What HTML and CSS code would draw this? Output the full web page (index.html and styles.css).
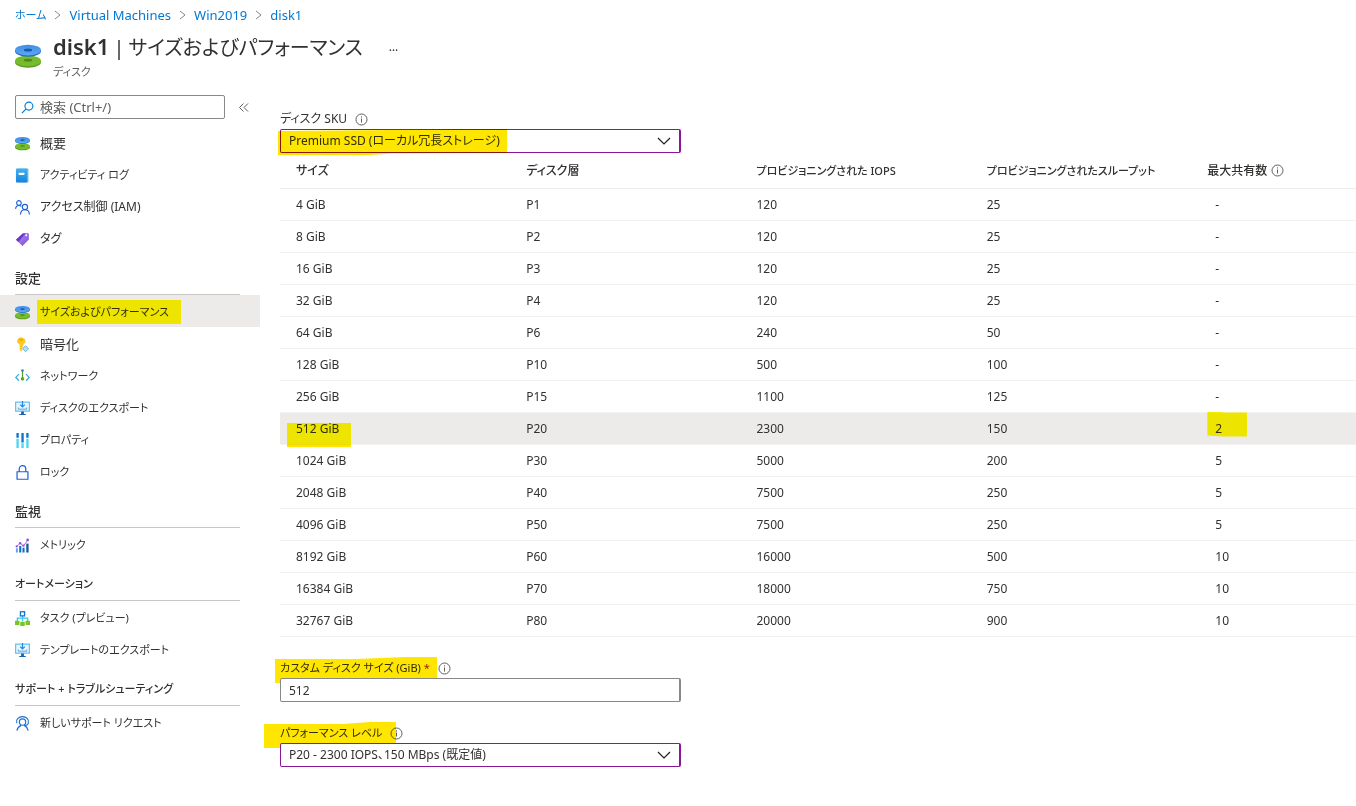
FILE: index.html
```html
<!DOCTYPE html>
<html lang="ja">
<head>
<meta charset="utf-8">
<meta name="viewport" content="width=device-width, initial-scale=1">
<title>disk1 | サイズおよびパフォーマンス</title>
<link rel="stylesheet" href="styles.css">
</head>
<body>
<svg class="defs" aria-hidden="true">
  <defs>
    <linearGradient id="blue" x1="0" y1="0" x2="0" y2="1"><stop offset="0" stop-color="#3f8fe6"/><stop offset="1" stop-color="#5ea6f2"/></linearGradient>
    <linearGradient id="book" x1="0" y1="0" x2="0" y2="1"><stop offset="0" stop-color="#45b0ea"/><stop offset="1" stop-color="#1583dc"/></linearGradient>
    <linearGradient id="violet" x1="0" y1="0" x2="1" y2="1"><stop offset="0" stop-color="#b796f9"/><stop offset="1" stop-color="#7a4bd0"/></linearGradient>
    <symbol id="i-disk" viewBox="0 0 24 24">
      <path d="M0 16.500v1.300c0 2.800 5.400 5 12 5s12-2.200 12-5v-1.300z" fill="#5a9a1c"/>
      <ellipse cx="12" cy="16.500" rx="12" ry="5" fill="#76bc2d"/>
      <ellipse cx="12" cy="15.900" rx="4" ry="1.300" fill="#4f8a18"/>
      <path d="M0 6.500v1.200c0 2.800 5.400 5 12 5s12-2.200 12-5V6.500z" fill="#1a70cc"/>
      <ellipse cx="12" cy="6.500" rx="12" ry="5" fill="url(#blue)"/>
      <ellipse cx="12" cy="6.400" rx="3.800" ry="1.400" fill="#125cad"/>
    </symbol>
    <symbol id="i-book" viewBox="0 0 16 16">
      <path d="M3 .5h10.500a1 1 0 0 1 1 1v13a1 1 0 0 1-1 1H3z" fill="#8fcdf0"/>
      <rect x="1" y=".5" width="12.300" height="15" rx="1" fill="url(#book)"/>
      <rect x="4" y="5" width="6" height="2.500" rx=".5" fill="#fff"/>
    </symbol>
    <symbol id="i-people" viewBox="0 0 16 16">
      <g fill="none" stroke="#1b62d5" stroke-width="1.200"><circle cx="4.200" cy="3.200" r="2.500"/><path d="M.6 9.500C.8 7 2.300 5.800 4.200 5.800c1.200 0 2 .4 2.600 1.100"/><circle cx="10.600" cy="7.500" r="2.800"/><path d="M5.800 15.500c.2-3.300 2.200-5.100 4.800-5.100s4.600 1.800 4.800 5.100"/></g>
    </symbol>
    <symbol id="i-tag" viewBox="0 0 16 16">
      <path d="M1 8.200 8.200 1.500 13.800 1l1 .9v6L8 15z" fill="url(#violet)"/><path d="M1 8.200 8.200 1.500l3.300-.3L3.600 10.600z" fill="#6b35cf"/><circle cx="12" cy="3.500" r="1" fill="#fff"/>
    </symbol>
    <symbol id="i-key" viewBox="0 0 16 16">
      <path d="M6.500 0 10.500 2 11.300 5.500 8.800 8.300v1.200l-1 1 1 1.200-1.200 1.200v1.200L6.500 15.500 5 14V8.300L2 5.500 2.700 2z" fill="#ffca1f"/><path d="M4.500 3h4.300" stroke="#e39a00" stroke-width="1.200"/><path d="m11.300 9.300 3.200 3.200-3.200 3.200-3.200-3.200z" fill="#b9e0f1" stroke="#5db0d4"/>
    </symbol>
    <symbol id="i-net" viewBox="0 0 16 16">
      <path d="M4.200 5.500.9 9l3.300 3.500M11.800 5.500 15.100 9l-3.300 3.500" fill="none" stroke="#3ba7d8" stroke-width="1.300"/><path d="M8 2v8" stroke="#5c9a28" stroke-width="1.200"/><circle cx="8" cy="1.700" r="1.400" fill="#2c83c9"/><circle cx="8" cy="10.500" r="1.900" fill="#5ba51e"/>
    </symbol>
    <symbol id="i-export" viewBox="0 0 16 16">
      <rect x=".7" y="1.200" width="14.600" height="9.600" fill="#e9f6ff" stroke="#5bb9ee" stroke-width="1.200"/><path d="M8 0v6M5.500 3.800 8 6.300l2.500-2.500" fill="none" stroke="#1e8ae0" stroke-width="1.300"/><path d="M3.500 7v1.700h9V7" fill="none" stroke="#5a9bc8"/><path d="M6.500 11.300h3v2.500h2V15h-7v-1.200h2z" fill="#1864b0"/>
    </symbol>
    <symbol id="i-props" viewBox="0 0 16 16">
      <path d="M1.500 0H4v5H1.500zM6.800 0h2.500v10H6.800zM12 0h2.500v5H12z" fill="#0d74cf"/><path d="M1.500 6H4v10H1.500zM6.800 11h2.500v5H6.800zM12 6h2.500v10H12z" fill="#4cd6f6"/>
    </symbol>
    <symbol id="i-lock" viewBox="0 0 16 16">
      <path d="M2.200 7.200h11.600v8H2.200zM4.500 7V4.200a3.500 3.500 0 0 1 7 0V7" fill="none" stroke="#1b62d5" stroke-width="1.300"/>
    </symbol>
    <symbol id="i-metric" viewBox="0 0 16 16">
      <path d="M1 11h2v4.500H1z" fill="#5ea0ef"/><path d="M4.500 8.500h2.200v7H4.500zM8 10.500h2.200v5H8z" fill="#0f6fc8"/><path d="M12 6h2.500v9.500H12z" fill="#1a5a9c"/><path d="M1.500 9.500 5.500 5.500 9 8.500l4.500-6" fill="none" stroke="#9b62e0"/><g fill="#8f52dc"><circle cx="1.800" cy="9" r="1.200"/><circle cx="5.500" cy="5.500" r="1.300"/><circle cx="9" cy="8.200" r="1.200"/><circle cx="13.500" cy="2" r="1.500"/></g>
    </symbol>
    <symbol id="i-task" viewBox="0 0 16 16">
      <path d="M8 5v6M2.500 11V7.500h11V11" fill="none" stroke="#35cbe9" stroke-width="1.400"/><rect x="5.800" y=".8" width="4.400" height="4.400" fill="#fff" stroke="#1475cc" stroke-width="1.400"/><path d="M0 10.500h4.800V15H0zM5.600 11.500h4.800V16H5.600zM11.200 10.500H16V15h-4.800z" fill="#7bc522"/>
    </symbol>
    <symbol id="i-support" viewBox="0 0 16 16">
      <g fill="none" stroke="#1b6fd5" stroke-width="1.200"><circle cx="8" cy="6.500" r="3.400"/><path d="M1.800 7.500C.8 3.500 4 .7 8 .7s7.200 2.800 6.200 6.800c-.5 2-2.200 2.700-4.700 2.700M2 15.500c.5-2.500 2.200-4.500 4.500-5.500M14 15.500c-.5-2.500-2-4.500-4-5.500"/></g>
    </symbol>
    <symbol id="i-info" viewBox="0 0 13 13">
      <circle cx="6.500" cy="6.500" r="5.500" fill="none" stroke="#605e5c"/><path d="M6.500 5.500v4M6.500 3.300v1.200" stroke="#605e5c"/>
    </symbol>
    <symbol id="i-chevron" viewBox="0 0 14 8"><path d="m1 1 6 6 6-6" fill="none" stroke="#201f1e" stroke-width="1.200"/></symbol>
    <symbol id="i-sep" viewBox="0 0 7 10"><path d="m1 1 5 4-5 4" fill="none" stroke="#8a8886"/></symbol>
  </defs>
</svg>

<header class="page-header">
  <nav class="crumbs" aria-label="階層リンク">
    <a class="kana" href="#">ホーム</a><svg class="sep"><use href="#i-sep"/></svg>
    <a href="#">Virtual Machines</a><svg class="sep"><use href="#i-sep"/></svg>
    <a href="#">Win2019</a><svg class="sep"><use href="#i-sep"/></svg>
    <a href="#">disk1</a>
  </nav>
  <div class="title-row">
    <svg class="title-icon"><use href="#i-disk"/></svg>
    <div>
      <div class="title-line">
        <h1><b>disk1</b><span>|</span><span>サイズおよびパフォーマンス</span></h1>
        <button class="plain" type="button" aria-label="その他">…</button>
      </div>
      <p class="subtitle">ディスク</p>
    </div>
  </div>
</header>

<div class="layout">
  <aside class="sidebar">
    <div class="search-row">
      <label class="search">
        <svg viewBox="0 0 14 14" aria-hidden="true"><circle cx="8.500" cy="5.500" r="4.300"/><path d="M5.300 8.700 1 13"/></svg>
        <input type="search" aria-label="検索" placeholder="検索 (Ctrl+/)">
      </label>
      <button class="plain collapse" type="button" aria-label="折りたたむ"><svg viewBox="0 0 10 9"><path d="m4.500.5-4 4 4 4m4.500-8-4 4 4 4"/></svg></button>
    </div>
    <nav aria-label="リソース メニュー">
      <ul class="menu">
        <li><a href="#"><svg><use href="#i-disk"/></svg><span>概要</span></a></li>
        <li><a href="#"><svg><use href="#i-book"/></svg><span class="kana">アクティビティ ログ</span></a></li>
        <li><a href="#"><svg><use href="#i-people"/></svg><span class="mixed">アクセス制御 (IAM)</span></a></li>
        <li><a href="#"><svg><use href="#i-tag"/></svg><span class="mixed">タグ</span></a></li>
      </ul>
      <h2>設定</h2>
      <ul class="menu">
        <li><a class="current" href="#" aria-current="page"><svg><use href="#i-disk"/></svg><span class="marked kana">サイズおよびパフォーマンス<i class="marker marker-menu"></i></span></a></li>
        <li><a href="#"><svg><use href="#i-key"/></svg><span>暗号化</span></a></li>
        <li><a href="#"><svg><use href="#i-net"/></svg><span class="kana">ネットワーク</span></a></li>
        <li><a href="#"><svg><use href="#i-export"/></svg><span class="kana">ディスクのエクスポート</span></a></li>
        <li><a href="#"><svg><use href="#i-props"/></svg><span class="kana">プロパティ</span></a></li>
        <li><a href="#"><svg><use href="#i-lock"/></svg><span class="kana">ロック</span></a></li>
      </ul>
      <h2>監視</h2>
      <ul class="menu">
        <li><a href="#"><svg><use href="#i-metric"/></svg><span class="kana">メトリック</span></a></li>
      </ul>
      <h2 class="kana">オートメーション</h2>
      <ul class="menu">
        <li><a href="#"><svg><use href="#i-task"/></svg><span class="kana">タスク (プレビュー)</span></a></li>
        <li><a href="#"><svg><use href="#i-export"/></svg><span class="kana">テンプレートのエクスポート</span></a></li>
      </ul>
      <h2 class="kana">サポート + トラブルシューティング</h2>
      <ul class="menu">
        <li><a href="#"><svg><use href="#i-support"/></svg><span class="kana">新しいサポート リクエスト</span></a></li>
      </ul>
    </nav>
  </aside>

  <main class="content">
    <div class="field">
      <div class="field-label"><label for="sku">ディスク SKU</label><svg class="info"><use href="#i-info"/></svg></div>
      <div class="control marked">
        <select id="sku"><option>Premium SSD (ローカル冗長ストレージ)</option></select>
        <svg class="chevron"><use href="#i-chevron"/></svg>
        <i class="marker marker-sku"></i>
      </div>
    </div>

    <table class="sizes">
      <colgroup><col class="wide"><col class="wide"><col class="wide"><col class="mid"><col></colgroup>
      <thead>
        <tr><th scope="col">サイズ</th><th scope="col">ディスク層</th><th scope="col" class="kana">プロビジョニングされた IOPS</th><th scope="col" class="kana">プロビジョニングされたスループット</th><th scope="col"><span class="head-info">最大共有数<svg class="info"><use href="#i-info"/></svg></span></th></tr>
      </thead>
      <tbody>
        <tr><td>4 GiB</td><td>P1</td><td>120</td><td>25</td><td>-</td></tr>
        <tr><td>8 GiB</td><td>P2</td><td>120</td><td>25</td><td>-</td></tr>
        <tr><td>16 GiB</td><td>P3</td><td>120</td><td>25</td><td>-</td></tr>
        <tr><td>32 GiB</td><td>P4</td><td>120</td><td>25</td><td>-</td></tr>
        <tr><td>64 GiB</td><td>P6</td><td>240</td><td>50</td><td>-</td></tr>
        <tr><td>128 GiB</td><td>P10</td><td>500</td><td>100</td><td>-</td></tr>
        <tr><td>256 GiB</td><td>P15</td><td>1100</td><td>125</td><td>-</td></tr>
        <tr class="selected"><td><span class="marked">512 GiB<i class="marker marker-size"></i></span></td><td>P20</td><td>2300</td><td>150</td><td><span class="marked">2<i class="marker marker-share"></i></span></td></tr>
        <tr><td>1024 GiB</td><td>P30</td><td>5000</td><td>200</td><td>5</td></tr>
        <tr><td>2048 GiB</td><td>P40</td><td>7500</td><td>250</td><td>5</td></tr>
        <tr><td>4096 GiB</td><td>P50</td><td>7500</td><td>250</td><td>5</td></tr>
        <tr><td>8192 GiB</td><td>P60</td><td>16000</td><td>500</td><td>10</td></tr>
        <tr><td>16384 GiB</td><td>P70</td><td>18000</td><td>750</td><td>10</td></tr>
        <tr><td>32767 GiB</td><td>P80</td><td>20000</td><td>900</td><td>10</td></tr>
      </tbody>
    </table>

    <div class="field spaced">
      <div class="field-label marked"><label class="kana" for="custom">カスタム ディスク サイズ (GiB) <span class="required">*</span></label><svg class="info"><use href="#i-info"/></svg><i class="marker marker-custom"></i></div>
      <div class="control"><input id="custom" type="text" value="512"></div>
    </div>
    <div class="field spaced">
      <div class="field-label marked"><label class="kana" for="tier">パフォーマンス レベル</label><svg class="info"><use href="#i-info"/></svg><i class="marker marker-tier"></i></div>
      <div class="control">
        <select id="tier"><option>P20 - 2300 IOPS、150 MBps (既定値)</option></select>
        <svg class="chevron"><use href="#i-chevron"/></svg>
      </div>
    </div>
  </main>
</div>
</body>
</html>
```

FILE: styles.css
```css
* { box-sizing: border-box; }

body {
  margin: 0;
  background: #fff;
  color: #323130;
  font: 12px/16px "Noto Sans", "Noto Sans CJK JP", sans-serif;
  font-feature-settings: "palt";
}

input, select, button { font: inherit; font-feature-settings: inherit; color: inherit; }
a { color: #0078d4; text-decoration: none; }
.defs { position: absolute; width: 0; height: 0; }
.plain { border: 0; padding: 0; background: none; }

/* Header */
.page-header { padding: 5px 15px 0; }
.crumbs { display: flex; align-items: center; gap: 8px; font-size: 13px; line-height: 20px; }
.sep { width: 7px; height: 10px; }
.title-row { display: flex; gap: 12px; padding-top: 5px; }
.title-icon { width: 26px; height: 26px; margin-top: 13px; }
.title-line { display: flex; align-items: center; gap: 26px; }
h1 { display: flex; align-items: baseline; gap: 4px; margin: 0; font-size: 20px; line-height: 32px; font-weight: 400; }
h1 b { font-size: 22px; font-weight: 600; }
.subtitle { margin: 0; color: #605e5c; font-size: 11px; }

/* Resource menu */
.layout { display: flex; align-items: flex-start; padding-top: 15px; }
.sidebar { flex: 0 0 260px; }
.search-row { display: flex; align-items: center; gap: 14px; padding-left: 15px; margin-bottom: 7px; }
.search {
  display: flex;
  align-items: center;
  gap: 6px;
  width: 210px;
  height: 24px;
  padding: 0 5px;
  border: 1px solid #8a8886;
  border-radius: 2px;
  font-size: 13px;
}
.search svg { flex: none; width: 13px; height: 13px; fill: none; stroke: #0078d4; stroke-width: 1.200; }
.search input { flex: 1; min-width: 0; border: 0; padding: 0; outline: 0; background: none; }
.search input::placeholder { color: #605e5c; opacity: 1; }
.collapse { display: flex; }
.collapse svg { width: 10px; height: 9px; fill: none; stroke: #605e5c; }

.menu { list-style: none; margin: 0; padding: 0; }
.menu a { display: flex; align-items: center; gap: 10px; height: 32px; padding: 2px 15px 0; color: #323130; font-size: 13px; }
.menu svg { width: 15px; height: 15px; }
.menu .current { background: #edebe9; }
.sidebar h2 {
  margin: 0 20px 0 15px;
  padding: 16px 0 8px;
  border-bottom: 1px solid #c8c6c4;
  font-size: 13px;
  line-height: 16px;
  font-weight: 500;
}

/* Form fields */
.content { flex: 1; min-width: 0; padding: 14px 0 38px 20px; }
.field-label { display: flex; align-items: center; gap: 8px; line-height: 20px; }
.info { width: 13px; height: 13px; }
.required { color: #a4262c; }
.control { position: relative; max-width: 401px; }
.control select, .control input {
  display: block;
  width: 100%;
  height: 24px;
  margin: 0;
  padding: 0 32px 0 8px;
  border: 1px solid #8a8886;
  border-right-width: 2px;
  border-radius: 2px;
  background: #fff;
  appearance: none;
}
.control select { border-color: #881798; }
.chevron { position: absolute; right: 10px; top: 8px; width: 14px; height: 8px; pointer-events: none; }
.spaced { padding-top: 21px; }

/* Size table */
.sizes { width: 100%; table-layout: fixed; border-collapse: separate; border-spacing: 0; }
.wide { width: 21.4%; }
.mid { width: 20.5%; }
.sizes th, .sizes td { padding: 0 0 0 16px; text-align: left; white-space: nowrap; }
.sizes th { height: 36px; border-bottom: 1px solid #edebe9; font-weight: 500; }
.sizes td { height: 32px; border-bottom: 1px solid #f3f2f1; }
.sizes td:last-child { padding-left: 24px; }
.sizes .selected td { background: #edebe9; }
.head-info { display: flex; align-items: center; gap: 4px; }

.kana, .menu .kana, .sidebar .kana, .sizes .kana { font-size: 11px; }
.menu .mixed { font-size: 12px; }

/* Highlighter strokes */
.marked { position: relative; }
.marker { position: absolute; background: #ffe600; mix-blend-mode: multiply; pointer-events: none; }
.marker-menu { left: -3px; top: -4px; width: 144px; height: 24px; background: #fff900; }
.marker-sku { left: -2px; top: 0; width: 229px; height: 26px; clip-path: polygon(0 8%, 100% 0, 100% 92%, 50% 94%, 40% 100%, 0 100%); }
.marker-size { left: -9px; top: 3px; width: 64px; height: 24px; background: linear-gradient(#fff900 21px, #ffe600 21px); }
.marker-share { left: -8px; top: -8px; width: 40px; height: 25px; background: #fff900; clip-path: polygon(0 0, 30% 0, 40% 4%, 100% 4%, 100% 100%, 40% 100%, 0 96%); }
.marker-custom { left: -5px; top: -1px; width: 162px; height: 26px; clip-path: polygon(0 8%, 50% 8%, 80% 0, 100% 0, 100% 92%, 55% 94%, 40% 100%, 0 100%); }
.marker-tier { left: -16px; top: -1px; width: 132px; height: 26px; clip-path: polygon(0 8%, 60% 8%, 80% 0, 100% 0, 100% 88%, 75% 100%, 0 100%); }
```
